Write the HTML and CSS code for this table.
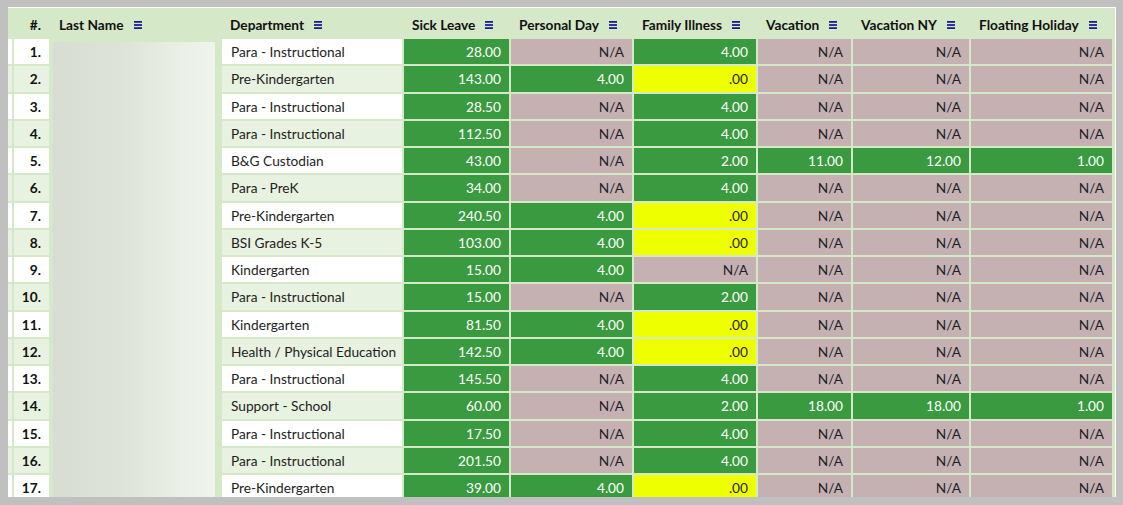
FILE: index.html
```html
<!DOCTYPE html>
<html>
<head>
<meta charset="utf-8">
<link rel="stylesheet" href="styles.css">
</head>
<body>
<div class="frame">
  <div class="grid">
    <div class="row head">
      <div class="c"></div>
      <div class="c num">#.</div>
      <div class="c">Last Name <svg class="menu" viewBox="0 0 9 9"><rect y="0" width="9" height="2"/><rect y="3.5" width="9" height="2"/><rect y="7" width="9" height="2"/></svg></div>
      <div class="c">Department <svg class="menu" viewBox="0 0 9 9"><rect y="0" width="9" height="2"/><rect y="3.5" width="9" height="2"/><rect y="7" width="9" height="2"/></svg></div>
      <div class="c">Sick Leave <svg class="menu" viewBox="0 0 9 9"><rect y="0" width="9" height="2"/><rect y="3.5" width="9" height="2"/><rect y="7" width="9" height="2"/></svg></div>
      <div class="c">Personal Day <svg class="menu" viewBox="0 0 9 9"><rect y="0" width="9" height="2"/><rect y="3.5" width="9" height="2"/><rect y="7" width="9" height="2"/></svg></div>
      <div class="c">Family Illness <svg class="menu" viewBox="0 0 9 9"><rect y="0" width="9" height="2"/><rect y="3.5" width="9" height="2"/><rect y="7" width="9" height="2"/></svg></div>
      <div class="c">Vacation <svg class="menu" viewBox="0 0 9 9"><rect y="0" width="9" height="2"/><rect y="3.5" width="9" height="2"/><rect y="7" width="9" height="2"/></svg></div>
      <div class="c">Vacation NY <svg class="menu" viewBox="0 0 9 9"><rect y="0" width="9" height="2"/><rect y="3.5" width="9" height="2"/><rect y="7" width="9" height="2"/></svg></div>
      <div class="c">Floating Holiday <svg class="menu" viewBox="0 0 9 9"><rect y="0" width="9" height="2"/><rect y="3.5" width="9" height="2"/><rect y="7" width="9" height="2"/></svg></div>
    </div>

    <div class="row odd"><div class="c"></div><div class="c num">1.</div><div class="c name"></div><div class="c dept">Para - Instructional</div><div class="c g">28.00</div><div class="c m">N/A</div><div class="c g">4.00</div><div class="c m">N/A</div><div class="c m">N/A</div><div class="c m">N/A</div></div>
    <div class="row even"><div class="c"></div><div class="c num">2.</div><div class="c name"></div><div class="c dept">Pre-Kindergarten</div><div class="c g">143.00</div><div class="c g">4.00</div><div class="c y">.00</div><div class="c m">N/A</div><div class="c m">N/A</div><div class="c m">N/A</div></div>
    <div class="row odd"><div class="c"></div><div class="c num">3.</div><div class="c name"></div><div class="c dept">Para - Instructional</div><div class="c g">28.50</div><div class="c m">N/A</div><div class="c g">4.00</div><div class="c m">N/A</div><div class="c m">N/A</div><div class="c m">N/A</div></div>
    <div class="row even"><div class="c"></div><div class="c num">4.</div><div class="c name"></div><div class="c dept">Para - Instructional</div><div class="c g">112.50</div><div class="c m">N/A</div><div class="c g">4.00</div><div class="c m">N/A</div><div class="c m">N/A</div><div class="c m">N/A</div></div>
    <div class="row odd"><div class="c"></div><div class="c num">5.</div><div class="c name"></div><div class="c dept">B&amp;G Custodian</div><div class="c g">43.00</div><div class="c m">N/A</div><div class="c g">2.00</div><div class="c g">11.00</div><div class="c g">12.00</div><div class="c g">1.00</div></div>
    <div class="row even"><div class="c"></div><div class="c num">6.</div><div class="c name"></div><div class="c dept">Para - PreK</div><div class="c g">34.00</div><div class="c m">N/A</div><div class="c g">4.00</div><div class="c m">N/A</div><div class="c m">N/A</div><div class="c m">N/A</div></div>
    <div class="row odd"><div class="c"></div><div class="c num">7.</div><div class="c name"></div><div class="c dept">Pre-Kindergarten</div><div class="c g">240.50</div><div class="c g">4.00</div><div class="c y">.00</div><div class="c m">N/A</div><div class="c m">N/A</div><div class="c m">N/A</div></div>
    <div class="row even"><div class="c"></div><div class="c num">8.</div><div class="c name"></div><div class="c dept">BSI Grades K-5</div><div class="c g">103.00</div><div class="c g">4.00</div><div class="c y">.00</div><div class="c m">N/A</div><div class="c m">N/A</div><div class="c m">N/A</div></div>
    <div class="row odd"><div class="c"></div><div class="c num">9.</div><div class="c name"></div><div class="c dept">Kindergarten</div><div class="c g">15.00</div><div class="c g">4.00</div><div class="c m">N/A</div><div class="c m">N/A</div><div class="c m">N/A</div><div class="c m">N/A</div></div>
    <div class="row even"><div class="c"></div><div class="c num">10.</div><div class="c name"></div><div class="c dept">Para - Instructional</div><div class="c g">15.00</div><div class="c m">N/A</div><div class="c g">2.00</div><div class="c m">N/A</div><div class="c m">N/A</div><div class="c m">N/A</div></div>
    <div class="row odd"><div class="c"></div><div class="c num">11.</div><div class="c name"></div><div class="c dept">Kindergarten</div><div class="c g">81.50</div><div class="c g">4.00</div><div class="c y">.00</div><div class="c m">N/A</div><div class="c m">N/A</div><div class="c m">N/A</div></div>
    <div class="row even"><div class="c"></div><div class="c num">12.</div><div class="c name"></div><div class="c dept">Health / Physical Education</div><div class="c g">142.50</div><div class="c g">4.00</div><div class="c y">.00</div><div class="c m">N/A</div><div class="c m">N/A</div><div class="c m">N/A</div></div>
    <div class="row odd"><div class="c"></div><div class="c num">13.</div><div class="c name"></div><div class="c dept">Para - Instructional</div><div class="c g">145.50</div><div class="c m">N/A</div><div class="c g">4.00</div><div class="c m">N/A</div><div class="c m">N/A</div><div class="c m">N/A</div></div>
    <div class="row even"><div class="c"></div><div class="c num">14.</div><div class="c name"></div><div class="c dept">Support - School</div><div class="c g">60.00</div><div class="c m">N/A</div><div class="c g">2.00</div><div class="c g">18.00</div><div class="c g">18.00</div><div class="c g">1.00</div></div>
    <div class="row odd"><div class="c"></div><div class="c num">15.</div><div class="c name"></div><div class="c dept">Para - Instructional</div><div class="c g">17.50</div><div class="c m">N/A</div><div class="c g">4.00</div><div class="c m">N/A</div><div class="c m">N/A</div><div class="c m">N/A</div></div>
    <div class="row even"><div class="c"></div><div class="c num">16.</div><div class="c name"></div><div class="c dept">Para - Instructional</div><div class="c g">201.50</div><div class="c m">N/A</div><div class="c g">4.00</div><div class="c m">N/A</div><div class="c m">N/A</div><div class="c m">N/A</div></div>
    <div class="row odd"><div class="c"></div><div class="c num">17.</div><div class="c name"></div><div class="c dept">Pre-Kindergarten</div><div class="c g">39.00</div><div class="c g">4.00</div><div class="c y">.00</div><div class="c m">N/A</div><div class="c m">N/A</div><div class="c m">N/A</div></div>
  </div>
  <div class="blur"></div>
</div>
</body>
</html>
```
FILE: styles.css
```css
html, body {
  margin: 0;
  padding: 0;
  background: #c0c0c0;
}
body {
  padding: 7px 0 0 8px;
  font-family: Lato, "Open Sans", sans-serif;
  font-size: 13.7px;
  color: #1e1e1e;
}
.frame {
  position: relative;
  width: 1107px;
  height: 489px;
  overflow: hidden;
  background: #d5e8c8;
  border-top: 1px solid #ffffff;
  border-right: 1px solid #ffffff;
}
.grid {
  display: grid;
  grid-template-columns: 4px 35px 169px 180px 105px 121px 122px 93px 116px 141px;
  grid-template-rows: 29px;
  grid-auto-rows: 25.25px;
  gap: 2px;
}
.row {
  display: contents;
}
.c {
  display: flex;
  align-items: center;
  justify-content: flex-end;
  padding: 0 8px;
  white-space: nowrap;
  overflow: hidden;
}
.head .c {
  justify-content: flex-start;
  font-weight: bold;
  color: #111;
  padding-top: 4px;
}
.head .c.num {
  justify-content: flex-end;
}
.menu {
  width: 8px;
  height: 8px;
  margin-left: 10px;
  fill: #1c1c8e;
  flex: none;
}
.c:first-child {
  padding: 0;
}
.odd .c:first-child,
.odd .num,
.odd .dept {
  background: #ffffff;
}
.even .c:first-child,
.even .num,
.even .dept {
  background: #e8f2e0;
}
.num {
  font-weight: bold;
  color: #111;
}
.c.name {
  background: transparent;
}
.dept {
  justify-content: flex-start;
  padding-left: 9px;
}
.g {
  background: #3a9a3f;
  color: #ffffff;
}
.m {
  background: #c5b1b1;
  color: #1e1e2a;
}
.y {
  background: #eeff00;
  color: #1e1e1e;
}
.blur {
  position: absolute;
  left: 45px;
  top: 34px;
  width: 162px;
  bottom: 0;
  background: linear-gradient(90deg, #d8ddd4 0%, #dfe4da 45%, #eaf0e7 80%, #eff4ed 100%);
}
```
